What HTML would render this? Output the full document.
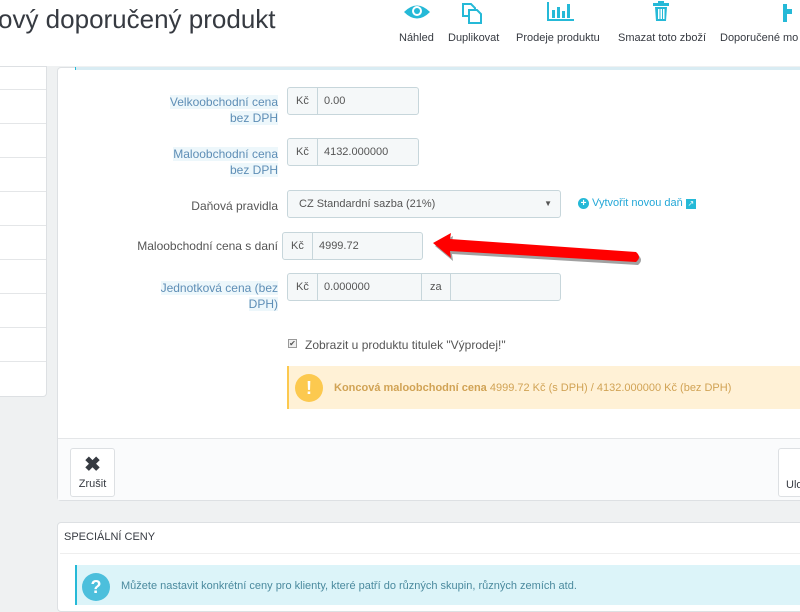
<!DOCTYPE html>
<html><head><meta charset="utf-8"><style>
*{box-sizing:border-box;margin:0;padding:0}
body{width:800px;height:600px;overflow:hidden;background:#eff1f2;font-family:"Liberation Sans",sans-serif;font-size:12px;color:#555;position:relative}
.a{position:absolute}
.hdr{left:0;top:0;width:800px;height:66px;background:#fff}
.title{left:-2px;top:4px;font-size:26px;color:#363a41}
.tb{top:32px;font-size:11px;color:#363a41;white-space:nowrap}
.side{left:0;top:66px;width:47px;height:331px;background:#fff;border:1px solid #dde0e3;border-left:none;border-radius:0 0 4px 0}
.side div{height:34px;border-bottom:1px solid #e4e6e8}
.panel{left:57px;top:67px;width:750px;height:434px;background:#fff;border:1px solid #dde0e3;border-radius:4px}
.lbl{text-align:right;color:#555;font-size:12px;line-height:16px}
.hl{background:#edf7fb;color:#5e8eb6}
.inp{height:28px;border:1px solid #c7d6db;background:#f5f8f9;border-radius:3px;display:flex;font-size:11px;color:#555;line-height:26px}
.inp span{padding:0 8px;border-right:1px solid #c7d6db}
.foot{left:58px;top:438px;width:742px;height:62px;background:#fafbfc;border-top:1px solid #e4e6e8}
.btn{background:#fff;border:1px solid #dde0e3;border-radius:3px}
</style></head><body>
<div class="a hdr"></div>
<div class="a title">ový doporučený produkt</div>
<svg class="a" style="left:400px;top:0" width="400" height="30">
<path d="M4 12 Q17 -1 30 12 Q17 25 4 12Z" fill="#25b9d7"/><circle cx="17" cy="11" r="5" fill="#fff"/><circle cx="17" cy="11" r="3" fill="#25b9d7"/>
<g fill="none" stroke="#25b9d7" stroke-width="2"><path d="M63 4h8l4 4v8h-12z"/><path d="M69 10h8l4 4v9h-12z" fill="#fff"/></g>
<g fill="#25b9d7"><rect x="147" y="2" width="2" height="19"/><rect x="147" y="19" width="27" height="2"/><rect x="152" y="10" width="3" height="8"/><rect x="157" y="7" width="3" height="11"/><rect x="162" y="11" width="3" height="7"/><rect x="167" y="4" width="3" height="14"/></g>
<g fill="#25b9d7"><rect x="253" y="3" width="16" height="3"/><rect x="258" y="1" width="6" height="2"/><path d="M255 7h12l-1 14h-10z"/></g>
<g fill="#fff"><rect x="258" y="9" width="1.5" height="10"/><rect x="260.5" y="9" width="1.5" height="10"/><rect x="263" y="9" width="1.5" height="10"/></g>
<path d="M383 4h4v5h5v5h-5v8h-4z" fill="#25b9d7"/>
</svg>
<div class="a tb" style="left:399px">Náhled</div>
<div class="a tb" style="left:448px">Duplikovat</div>
<div class="a tb" style="left:516px">Prodeje produktu</div>
<div class="a tb" style="left:618px">Smazat toto zboží</div>
<div class="a tb" style="left:720px">Doporučené mo</div>
<div class="a side"><div style="height:23px"></div><div></div><div></div><div></div><div></div><div></div><div></div><div></div><div></div></div>
<div class="a" style="left:47px;top:66px;width:10px;height:534px;background:#eff1f2"></div>
<div class="a panel"></div>
<div class="a" style="left:75px;top:67px;width:725px;height:3px;background:#d9ecf3;border-left:1px solid #25b9d7"></div>
<div class="a lbl" style="left:150px;top:94px;width:128px"><span class="hl">Velkoobchodní cena</span><br><span class="hl">bez DPH</span></div>
<div class="a inp" style="left:287px;top:87px;width:132px"><span>Kč</span>&nbsp;&nbsp;0.00</div>
<div class="a lbl" style="left:150px;top:146px;width:128px"><span class="hl">Maloobchodní cena</span><br><span class="hl">bez DPH</span></div>
<div class="a inp" style="left:287px;top:138px;width:132px"><span>Kč</span>&nbsp;&nbsp;4132.000000</div>
<div class="a lbl" style="left:150px;top:198px;width:128px">Daňová pravidla</div>
<div class="a inp" style="left:287px;top:190px;width:274px;padding-left:11px">CZ Standardní sazba (21%)<span style="border:none;margin-left:auto;font-size:8px">▼</span></div>
<div class="a" style="left:578px;top:197px;color:#25a8d7;font-size:11px"><span style="display:inline-block;width:11px;height:11px;border-radius:50%;background:#25b9d7;color:#fff;font-size:10px;line-height:11px;text-align:center;font-weight:bold">+</span> Vytvořit novou daň <span style="display:inline-block;width:10px;height:10px;background:#25b9d7;color:#fff;font-size:8px;line-height:10px;text-align:center">↗</span></div>
<div class="a lbl" style="left:100px;top:238px;width:178px">Maloobchodní cena s daní</div>
<div class="a inp" style="left:282px;top:232px;width:141px"><span>Kč</span>&nbsp;&nbsp;4999.72</div>
<div class="a lbl" style="left:150px;top:280px;width:128px"><span class="hl">Jednotková cena (bez</span><br><span class="hl">DPH)</span></div>
<div class="a inp" style="left:287px;top:273px;width:274px"><span>Kč</span>&nbsp;&nbsp;<b style="font-weight:normal;width:98px;border-right:1px solid #c7d6db">0.000000</b><span style="border-right:1px solid #c7d6db">za</span></div>
<svg class="a" style="left:428px;top:230px" width="220" height="40"><path d="M5 13 L23 3 L22 9 L208 22 Q214 27 208 32 L22 21 L23 28Z" fill="#444" opacity=".5" transform="translate(2,3)"/><path d="M5 13 L23 3 L22 9 L208 22 Q214 27 208 32 L22 21 L23 28Z" fill="#f00"/></svg>
<div class="a" style="left:288px;top:339px;width:9px;height:9px;border:1px solid #999;background:#eee;font-size:8px;line-height:7px;text-align:center">✔</div>
<div class="a" style="left:305px;top:338px;font-size:12px;color:#555">Zobrazit u produktu titulek "Výprodej!"</div>
<div class="a" style="left:287px;top:366px;width:513px;height:43px;background:#fff1d6;border-left:2px solid #fcc94f"></div>
<div class="a" style="left:295px;top:374px;width:28px;height:28px;border-radius:50%;background:#fcc94f;color:#fff;font-weight:bold;font-size:18px;text-align:center;line-height:28px">!</div>
<div class="a" style="left:334px;top:382px;font-size:11px;color:#d1a355"><b>Koncová maloobchodní cena</b> 4999.72 Kč (s DPH) / 4132.000000 Kč (bez DPH)</div>
<div class="a foot"></div>
<div class="a btn" style="left:70px;top:448px;width:45px;height:49px;text-align:center;font-size:11px;color:#363a41"><div style="font-size:20px;font-weight:bold;line-height:26px;margin-top:3px">✖</div>Zrušit</div>
<div class="a btn" style="left:778px;top:448px;width:30px;height:49px;font-size:11px;color:#363a41;padding:30px 0 0 7px">Ulo</div>
<div class="a" style="left:57px;top:522px;width:750px;height:90px;background:#fff;border:1px solid #dde0e3;border-radius:4px"></div>
<div class="a" style="left:60px;top:553px;width:740px;height:1px;background:#eee"></div>
<div class="a" style="left:64px;top:531px;font-size:11px;color:#363a41">SPECIÁLNÍ CENY</div>
<div class="a" style="left:75px;top:565px;width:725px;height:40px;background:#dcf4f9;border-left:2px solid #25b9d7"></div>
<div class="a" style="left:82px;top:573px;width:28px;height:28px;border-radius:50%;background:#4cbfdc;color:#fff;font-weight:bold;font-size:18px;text-align:center;line-height:28px">?</div>
<div class="a" style="left:121px;top:580px;font-size:11px;color:#4b8a9e">Můžete nastavit konkrétní ceny pro klienty, které patří do různých skupin, různých zemích atd.</div>
</body></html>
